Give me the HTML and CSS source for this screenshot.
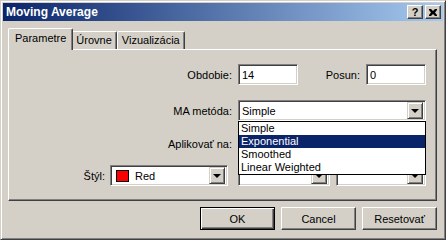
FILE: index.html
```html
<html>
<head>
<title>Moving Average</title>
<link rel="stylesheet" href="styles.css">
</head>
<body>

<div class="window">
    <div class="titlebar">
        <span class="title">Moving Average</span>
        <div class="caption-buttons">
            <div class="cap help">?</div>
            <div class="cap">
                <svg width="8" height="7" viewBox="0 0 8 7"><path d="M0 0h2l2 2l2-2h2v1l-2 2.5l2 2.5v1h-2l-2-2l-2 2h-2v-1l2-2.5l-2-2.5z" fill="#000"/></svg>
            </div>
        </div>
    </div>

    <div class="content">
        <div class="tabs">
            <div class="tab active">Parametre</div>
            <div class="tab">Úrovne</div>
            <div class="tab">Vizualizácia</div>
        </div>

        <div class="panel">
            <div class="row row-period">
                <label class="label wide">Obdobie:</label>
                <div class="field num">14</div>
                <label class="label shift">Posun:</label>
                <div class="field num">0</div>
            </div>

            <div class="row row-method">
                <label class="label wide">MA metóda:</label>
                <div class="field combo full">
                    <span class="value">Simple</span>
                    <span class="arrow"><i></i></span>
                </div>
            </div>

            <div class="row row-apply">
                <label class="label wide">Aplikovať na:</label>
                <div class="field combo full">
                    <span class="value"></span>
                    <span class="arrow"><i></i></span>
                </div>
            </div>

            <div class="row row-style">
                <label class="label narrow">Štýl:</label>
                <div class="field combo color">
                    <span class="swatch"></span>
                    <span class="value">Red</span>
                    <span class="arrow"><i></i></span>
                </div>
                <div class="field combo line">
                    <span class="value"></span>
                    <span class="arrow"><i></i></span>
                </div>
                <div class="field combo width">
                    <span class="value"></span>
                    <span class="arrow"><i></i></span>
                </div>
            </div>

            <ul class="dropdown">
                <li>Simple</li>
                <li class="selected">Exponential</li>
                <li>Smoothed</li>
                <li>Linear Weighted</li>
            </ul>
        </div>

        <div class="actions">
            <div class="btn default">OK</div>
            <div class="btn">Cancel</div>
            <div class="btn">Resetovať</div>
        </div>
    </div>
</div>

</body>
</html>
```

FILE: styles.css
```css
* {
    box-sizing: border-box;
}

body {
    margin: 0;
    background-color: #d4d0c8;
    font-family: "Liberation Sans", Arial, sans-serif;
    font-size: 11px;
    color: #000;
}

.window {
    width: 446px;
    height: 240px;
    padding: 2px;
    background-color: #d4d0c8;
    border: 1px solid;
    border-color: #d4d0c8 #404040 #404040 #d4d0c8;
    box-shadow: inset 1px 1px #fff, inset -1px -1px #808080;
}

.titlebar {
    height: 18px;
    display: flex;
    align-items: center;
    justify-content: space-between;
    padding: 0 2px 0 3px;
    background: linear-gradient(to right, #0a246a, #a6caf0);
}

.title {
    color: #fff;
    font-weight: bold;
    font-size: 12px;
}

.caption-buttons {
    display: flex;
    gap: 2px;
}

.cap {
    width: 16px;
    height: 14px;
    display: flex;
    align-items: center;
    justify-content: center;
    background-color: #d4d0c8;
    border: 1px solid;
    border-color: #fff #404040 #404040 #fff;
    box-shadow: inset -1px -1px #808080;
}

.cap.help {
    font-weight: bold;
    font-size: 11px;
    line-height: 12px;
}

.content {
    padding: 0 6px 0 5px;
}

/* tabs */
.tabs {
    display: flex;
    align-items: flex-end;
    height: 21px;
    margin-top: 7px;
    padding-left: 2px;
}

.tab {
    height: 18px;
    line-height: 16px;
    padding: 0 4px;
    border-top: 1px solid #fff;
    border-left: 1px solid #fff;
    border-right: 1px solid #404040;
    border-radius: 2px 2px 0 0;
    box-shadow: inset -1px 0 #808080;
    background-color: #d4d0c8;
}

.tab.active {
    position: relative;
    z-index: 1;
    height: 22px;
    line-height: 19px;
    margin: 0 -2px -1px -2px;
    padding: 0 6px;
}

/* panel */
.panel {
    position: relative;
    height: 152px;
    border: 1px solid;
    border-color: #fff #404040 #404040 #fff;
    box-shadow: inset -1px -1px #808080;
}

.row {
    display: flex;
    align-items: center;
    height: 21px;
}

.row-period {
    margin-top: 14px;
}

.row-method {
    margin-top: 15px;
}

.row-apply {
    margin-top: 12px;
}

.row-style {
    margin-top: 11px;
}

.label {
    text-align: right;
    flex-shrink: 0;
}

.label.wide {
    width: 223px;
    margin-right: 6px;
}

.label.shift {
    width: 62px;
    margin-right: 6px;
}

.label.narrow {
    width: 96px;
    margin-right: 5px;
}

.field {
    height: 21px;
    display: flex;
    align-items: center;
    background-color: #fff;
    border: 1px solid;
    border-color: #808080 #fff #fff #808080;
    box-shadow: inset 1px 1px #404040, inset -1px -1px #d4d0c8;
    padding: 0 2px 0 3px;
}

.field.num {
    width: 60px;
}

.field.full {
    width: 188px;
}

.field.color {
    width: 118px;
}

.field.line {
    width: 92px;
    margin-left: 10px;
}

.field.width {
    width: 90px;
    margin-left: 6px;
}

.combo .value {
    flex: 1;
}

.swatch {
    width: 13px;
    height: 12px;
    margin: 0 6px 0 2px;
    background-color: #ff0000;
    border: 1px solid #000;
}

.arrow {
    width: 16px;
    height: 17px;
    display: flex;
    align-items: center;
    justify-content: center;
    background-color: #d4d0c8;
    border: 1px solid;
    border-color: #d4d0c8 #404040 #404040 #d4d0c8;
    box-shadow: inset 1px 1px #fff, inset -1px -1px #808080;
}

.arrow i {
    width: 0;
    height: 0;
    border-left: 4px solid transparent;
    border-right: 4px solid transparent;
    border-top: 4px solid #000;
}

/* open list of the MA method combo */
.dropdown {
    position: absolute;
    left: 229px;
    top: 71px;
    width: 188px;
    margin: 0;
    padding: 0;
    list-style: none;
    background-color: #fff;
    border: 1px solid #000;
}

.dropdown li {
    height: 13px;
    line-height: 13px;
    padding-left: 2px;
}

.dropdown li.selected {
    background-color: #0a246a;
    color: #fff;
}

/* buttons */
.actions {
    display: flex;
    justify-content: flex-end;
    gap: 6px;
    margin-top: 6px;
}

.btn {
    width: 75px;
    height: 23px;
    display: flex;
    align-items: center;
    justify-content: center;
    border: 1px solid;
    border-color: #fff #404040 #404040 #fff;
    box-shadow: inset -1px -1px #808080;
}

.btn.default {
    border-color: #000;
    box-shadow: inset 1px 1px #fff, inset -1px -1px #404040, inset -2px -2px #808080;
}
```
